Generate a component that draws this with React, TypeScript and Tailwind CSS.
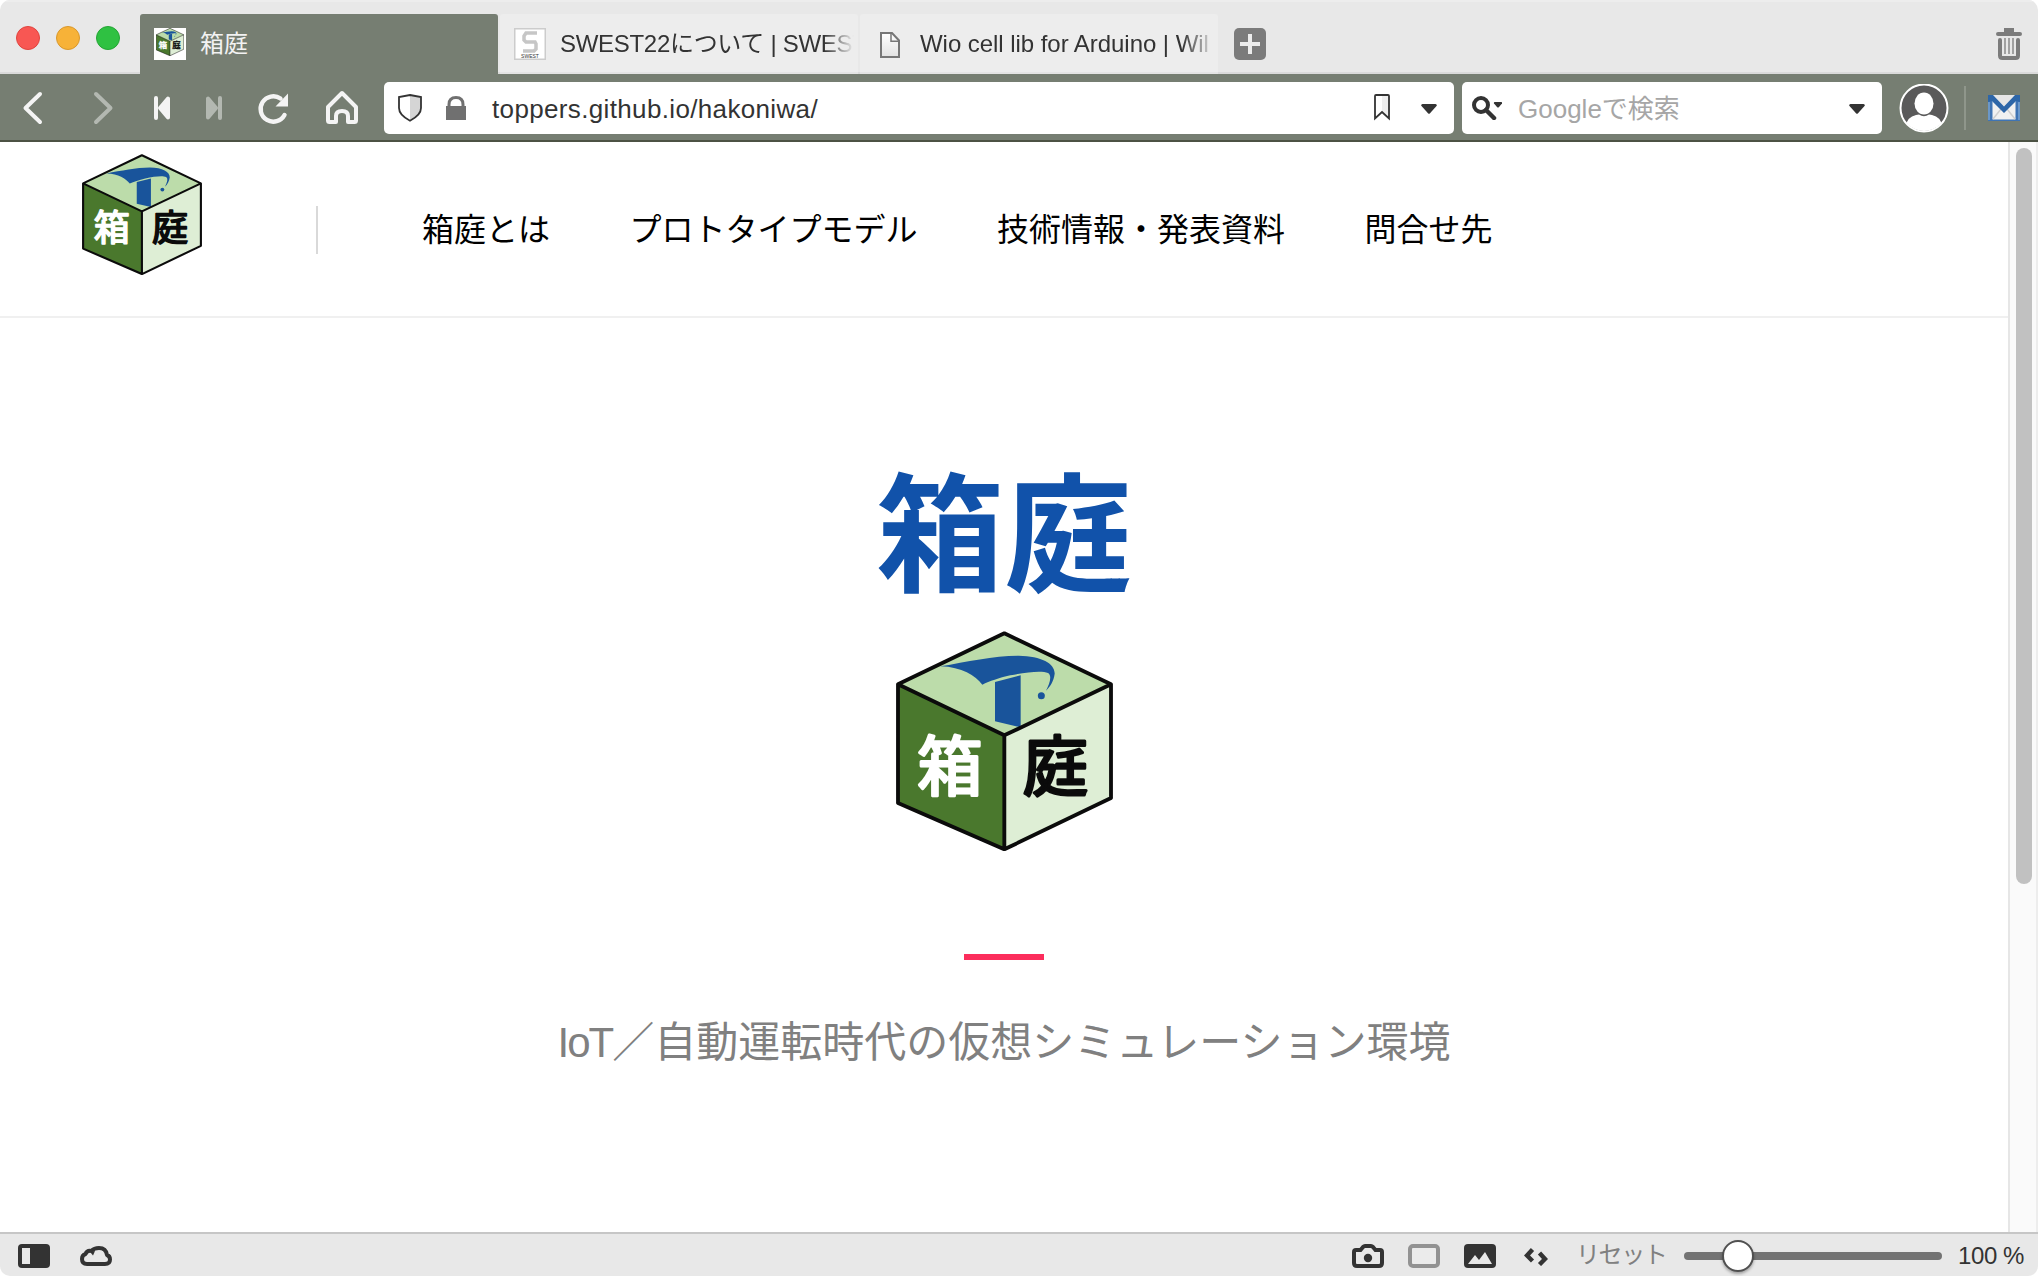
import React from "react";

const CJK = "font-['Liberation_Sans','Noto_Sans_CJK_JP',sans-serif]";

function CubeLogo({ className }: { className: string }) {
  return (
    <svg className={className} viewBox="107 542 651 660" preserveAspectRatio="none">
      <path d="M432 549 752 702 432 855 113 702Z" fill="#bcdcaa" />
      <path d="M113 702 432 855V1197L113 1058Z" fill="#4a782d" />
      <path d="M752 702 432 855V1197L752 1043Z" fill="#deeed5" />
      <path
        d="M240 648C320 634 400 616 475 616C545 617 584 640 583 670C580 692 570 708 557 721C568 700 576 676 563 668C545 660 500 665 450 675C415 683 388 693 366 703C345 676 305 650 240 648Z"
        fill="#19549b"
      />
      <path d="M404 695 481 675V831L404 813Z" fill="#19549b" />
      <circle cx="543" cy="736" r="10.5" fill="#19549b" />
      <path
        d="M432 549 752 702V1043L432 1197 113 1058V702ZM113 702 432 855 752 702M432 855V1197"
        fill="none"
        stroke="#0b0b0b"
        strokeWidth="11.5"
        strokeLinejoin="round"
      />
      <g
        fontFamily="'Noto Sans CJK JP', sans-serif"
        fontSize="196"
        fontWeight="400"
        textAnchor="middle"
        strokeWidth="9"
        strokeLinejoin="round"
      >
        <text x="269" y="1018" fill="#fff" stroke="#fff">箱</text>
        <text x="585" y="1018" fill="#0b0b0b" stroke="#0b0b0b">庭</text>
      </g>
    </svg>
  );
}

function Caret({ className }: { className: string }) {
  return (
    <svg className={className} viewBox="0 0 16 10">
      <path d="M1.5 0h13q2 .6 1 2L9 9.300q-1 1-2 0L.5 2q-1-1.400 1-2Z" fill="#333" />
    </svg>
  );
}

function TabStrip() {
  return (
    <div className="flex h-[74px] shrink-0 bg-[#e8e8e8] pt-3.5 shadow-[inset_0_-2px_0_#dadada,inset_0_2px_0_#ededed]">
      <div className="flex w-[140px] gap-4 pl-4 pt-3">
        <div className="size-6 rounded-full border border-[#e0443e] bg-[#f85753]" />
        <div className="size-6 rounded-full border border-[#d9982c] bg-[#f7b238]" />
        <div className="size-6 rounded-full border border-[#24a534] bg-[#2fc142]" />
      </div>
      <div className="flex h-[60px] w-[358px] rounded-t-[3px] bg-[#767e72] pl-3.5 pt-3.5">
        <div className="size-8 shrink-0 bg-white">
          <CubeLogo className="ml-0.5 h-[28px] w-[28px]" />
        </div>
        <div className="ml-3.5 mt-px text-[24px] leading-[30px] text-[#f2f2f2]">箱庭</div>
      </div>
      <div className="ml-0.5 flex h-[60px] w-[358px] rounded-t-[3px] border-b-2 border-[#e4e4e4] bg-[#ededed] pl-3.5 pt-3.5">
        <svg className="size-8 shrink-0" viewBox="0 0 32 32">
          <rect x=".75" y=".75" width="30.500" height="30.500" fill="#fff" stroke="#ccc" strokeWidth="1.500" />
          <path d="M23 5H12L10 8v4l2 2h9l1 2v5l-2 2H9" fill="none" stroke="#c6c6c6" strokeWidth="3.500" />
          <text x="16" y="29.500" fontSize="5" textAnchor="middle" fill="#333" fontFamily="Liberation Sans">SWEST</text>
        </svg>
        <div className="ml-3.5 w-[298px] shrink-0 whitespace-nowrap text-[24px] leading-8 tracking-[-0.3px] text-[#333] [mask-image:linear-gradient(to_right,#000_264px,transparent_294px)]">
          SWEST22について | SWEST
        </div>
      </div>
      <div className="ml-0.5 flex h-[60px] w-[358px] rounded-t-[3px] border-b-2 border-[#e4e4e4] bg-[#ededed] pl-5 pt-3.5">
        <svg className="mt-1 h-[26px] w-5 shrink-0" viewBox="0 0 20 26">
          <defs>
            <linearGradient id="doc" x1="0" y1="0" x2="0" y2="1">
              <stop offset="0" stopColor="#fff" />
              <stop offset="1" stopColor="#e2e2e2" />
            </linearGradient>
          </defs>
          <path d="M1 1H12L19 8.500V25H1Z" fill="url(#doc)" stroke="#777" strokeWidth="2" />
          <path d="M11 1V9.300H19" fill="none" stroke="#777" strokeWidth="1.500" />
        </svg>
        <div className="ml-5 w-[298px] shrink-0 whitespace-nowrap text-[24px] leading-8 tracking-[-0.05px] text-[#333] [mask-image:linear-gradient(to_right,#000_262px,transparent_296px)]">
          Wio cell lib for Arduino | Wil
        </div>
      </div>
      <svg className="ml-4 mt-3.5 size-8" viewBox="0 0 32 32">
        <rect width="32" height="32" rx="5" fill="#7b7b7b" />
        <path d="M16 6V26M6 16H26" stroke="#ececec" strokeWidth="4" />
      </svg>
      <svg className="ml-auto mr-4 mt-3.5 h-8 w-[26px]" viewBox="0 0 26 32">
        <path d="M8 0h10v4h6q2 0 2 2t-2 2H2Q0 8 0 6t2-2h6Z" fill="#7c7c7c" />
        <path d="M4 12V27.500Q4 30 6.500 30H19.500Q22 30 22 27.500V12" fill="none" stroke="#7c7c7c" strokeWidth="4" strokeLinecap="round" />
        <path d="M9 10V26M13 10V26M17 10V26" stroke="#999" strokeWidth="1.800" />
      </svg>
    </div>
  );
}

function Toolbar() {
  return (
    <div className="flex h-[68px] shrink-0 border-b-2 border-[#4c5244] bg-[#767e72] pt-2">
      <svg className="h-[52px] w-[384px] shrink-0" viewBox="0 82 384 52" fill="none">
        <path d="M40 94 25.500 108 40 122" stroke="#f4f4f4" strokeWidth="4" strokeLinecap="round" strokeLinejoin="round" />
        <path d="M96 94 110.500 108 96 122" stroke="#b3b8b1" strokeWidth="4" strokeLinecap="round" strokeLinejoin="round" />
        <path d="M156 98V118" stroke="#f4f4f4" strokeWidth="4" strokeLinecap="round" />
        <path d="M168 98.500V117.500L160 108Z" fill="#f4f4f4" stroke="#f4f4f4" strokeWidth="4" strokeLinejoin="round" />
        <path d="M220 98V118" stroke="#b3b8b1" strokeWidth="4" strokeLinecap="round" />
        <path d="M208 98.500V117.500L216 108Z" fill="#b3b8b1" stroke="#b3b8b1" strokeWidth="4" strokeLinejoin="round" />
        <path d="M280.500 98.500A12.700 12.700 0 1 0 284.500 115" stroke="#f4f4f4" strokeWidth="4.400" strokeLinecap="round" />
        <path d="M288 93.500V106.500H275.500Z" fill="#f4f4f4" />
        <path
          d="M342 93 328 107V120.500Q328 122 329.500 122H336V116Q336 111 342 111T348 116V122H354.500Q356 122 356 120.500V107Z"
          stroke="#f4f4f4"
          strokeWidth="4"
          strokeLinejoin="round"
        />
      </svg>
      <div className="flex h-[52px] w-[1070px] shrink-0 rounded-[5px] bg-white pl-3.5">
        <svg className="mt-3 h-7 w-6" viewBox="0 0 24 28">
          <path d="M12 1 23 3.500V14Q23 21 12 27Q1 21 1 14V3.500Z" fill="#fff" />
          <path d="M12 1 23 3.500V14Q23 21 12 27Z" fill="#d5d5d5" />
          <path d="M12 1 23 3V14Q23 21 12 26.700Q1 21 1 14V3Z" fill="none" stroke="#333" strokeWidth="1.800" />
        </svg>
        <svg className="ml-6 mt-3.5 h-6 w-5" viewBox="0 0 20 24">
          <path d="M0 10H20V24H0Z" fill="#707070" />
          <path d="M3 12V8.500Q3 1.500 10 1.500T17 8.500V12" fill="none" stroke="#707070" strokeWidth="3" />
        </svg>
        <div className="ml-[26px] w-[882px] text-[26px] leading-[54px] tracking-[0.35px] text-[#333]">toppers.github.io/hakoniwa/</div>
        <svg className="mt-3 h-[27px] w-4" viewBox="0 0 16 27">
          <path d="M8 1H15V24L8 18Z" fill="#eee" />
          <path d="M1 2Q1 1 2 1H14Q15 1 15 2V24.500L8 18 1 24.500Z" fill="none" stroke="#333" strokeWidth="1.800" />
        </svg>
        <Caret className="ml-[31px] mt-[22px] h-2.5 w-4" />
      </div>
      <div className="ml-2 flex h-[52px] w-[420px] shrink-0 rounded-[5px] bg-white pl-2.5">
        <svg className="mt-3.5 h-6 w-[30px]" viewBox="0 0 30 24">
          <circle cx="9" cy="9" r="7" fill="none" stroke="#333" strokeWidth="4" />
          <path d="M14 14 22 22" stroke="#333" strokeWidth="4.500" strokeLinecap="round" />
          <path d="M22.500 6h7q1 .5 .5 1.500L27 11q-1 1-2 0L22 7.500q-.5-1 .5-1.500Z" fill="#333" />
        </svg>
        <div className="ml-4 w-[331px] text-[26px] leading-[54px] text-[#a6a6a6]">Googleで検索</div>
        <Caret className="mt-[22px] h-2.5 w-4" />
      </div>
      <svg className="ml-[17px] mt-0.5 size-[50px]" viewBox="0 0 50 50">
        <defs>
          <clipPath id="face"><circle cx="25" cy="24" r="23" /></clipPath>
        </defs>
        <circle cx="25" cy="24" r="23.500" fill="#5a5a5a" stroke="#fff" strokeWidth="2" />
        <g fill="#fff" clipPath="url(#face)">
          <ellipse cx="25" cy="19.500" rx="9.500" ry="11" />
          <path d="M7 42Q8 33 17 31L20 30.500Q25 34 30 30.500L33 31Q42 33 43 42L25 50Z" />
        </g>
      </svg>
      <div className="ml-[15px] mt-1 h-11 w-0.5 bg-[#8f968b]" />
      <svg className="ml-[22px] mt-[13px] h-[26px] w-8" viewBox="0 0 32 26">
        <rect width="32" height="26" fill="#3f74b4" />
        <rect x="4.500" y="1" width="23" height="23.500" fill="#f1f1f1" />
        <path d="M5 24 13 14M27 24 19 14" stroke="#d0d0d0" strokeWidth="1.500" />
        <path d="M4 0H28L16 11Z" fill="#e6e6e6" />
        <path d="M0 0H5L16 11.500 27 0H32V7L28 6 16 18 4 6 0 7Z" fill="#2d66a8" />
        <path d="M1 7V25M31 7V25" stroke="#7aa3d0" strokeWidth="1.500" />
      </svg>
    </div>
  );
}

const NAV = ["箱庭とは", "プロトタイプモデル", "技術情報・発表資料", "問合せ先"];

function Page() {
  return (
    <div className="flex h-[1090px] shrink-0">
      <div className="w-[2008px] bg-white">
        <header className="flex h-44 border-b-2 border-[#f0f0f0] pl-[82px]">
          <CubeLogo className="mt-3 h-[121px] w-[120px]" />
          <div className="ml-[114px] mt-16 h-12 w-0.5 bg-[#d9d9d9]" />
          <nav className="ml-[104px] mt-16 flex gap-x-[79.5px] text-[32px] leading-[48px] text-black">
            {NAV.map((label) => (
              <a key={label}>{label}</a>
            ))}
          </nav>
        </header>
        <main className="flex flex-col items-center">
          <h1 className="mt-[124px] text-[128px] font-bold leading-[192px] text-[#1152aa]">箱庭</h1>
          <CubeLogo className="-mt-[3px] h-[220px] w-[217px]" />
          <div className="mt-[103px] h-1.5 w-20 bg-[#fc2d5c]" />
          <p className="mt-[52px] text-[42px] leading-[62px] text-[#808080]">
            <span className="tracking-[-2px]">IoT</span>／自動運転時代の仮想シミュレーション環境
          </p>
        </main>
      </div>
      <div className="w-[30px] border-l-2 border-r-2 border-l-[#e6e6e6] border-r-[#ededed] bg-[#fafafa] pl-1.5 pt-1.5">
        <div className="h-[736px] w-4 rounded-full bg-[#c1c1c1]" />
      </div>
    </div>
  );
}

function StatusBar() {
  return (
    <div className="flex h-11 shrink-0 items-start border-t-2 border-[#c6c6c6] bg-[#e8e8e8] pl-[18px]">
      <svg className="mt-2.5 h-6 w-8" viewBox="0 0 32 24">
        <rect width="32" height="24" rx="4" fill="#333" />
        <rect x="4" y="4" width="8" height="16" fill="#e8e8e8" />
      </svg>
      <svg className="ml-[30px] mt-3 h-5 w-8" viewBox="0 0 32 20">
        <path
          d="M7 18Q2 18 2 13Q2 9 5.500 8Q7 4 11.500 5Q14 2 19 2Q26 2 27 9Q30 10 30 13.500Q30 18 25 18Z"
          fill="none"
          stroke="#333"
          strokeWidth="4"
          strokeLinejoin="round"
        />
        <path d="M10.500 6.500 13 9.500 15 5" fill="#333" />
      </svg>
      <svg className="ml-auto mt-2.5 h-6 w-8" viewBox="0 0 32 24">
        <path
          d="M2 8Q2 6 4 6H8.500L11 3Q12 2 13 2H19Q20 2 21 3L23.500 6H28Q30 6 30 8V19Q30 22 27 22H5Q2 22 2 19Z"
          fill="none"
          stroke="#333"
          strokeWidth="4"
        />
        <circle cx="16" cy="14" r="4.200" fill="#333" />
      </svg>
      <svg className="ml-6 mt-2.5 h-6 w-8" viewBox="0 0 32 24">
        <rect x="2" y="2" width="28" height="20" rx="3" fill="#ebebeb" stroke="#929292" strokeWidth="4" />
      </svg>
      <svg className="ml-6 mt-2.5 h-6 w-8" viewBox="0 0 32 24">
        <rect width="32" height="24" rx="4" fill="#333" />
        <path d="M4 20 11 11 15 16 21 8 28 20Z" fill="#e8e8e8" />
      </svg>
      <svg className="ml-7 mt-3.5 h-[18px] w-6" viewBox="0 0 24 18">
        <path d="M8.500 1.500 3 7.500 8.500 13M15.500 5 21 11 15.500 16.500" fill="none" stroke="#333" strokeWidth="4.400" />
      </svg>
      <div className="ml-[28px] w-[108px] whitespace-nowrap text-[24px] leading-[42px] tracking-[-1.4px] text-[#808080]">リセット</div>
      <div className="mt-[18px] h-2 w-[258px] rounded-full bg-[#737373]">
        <div className="relative -top-3 left-[38px] size-8 rounded-full border-2 border-[#505050] bg-white shadow-[0_2px_3px_rgba(0,0,0,0.3)]" />
      </div>
      <div className="ml-4 w-20 whitespace-nowrap text-[24px] leading-[43px] tracking-[-0.4px] text-[#333]">100 %</div>
    </div>
  );
}

export default function App() {
  return (
    <div className={`${CJK} flex h-[1276px] w-[2038px] flex-col overflow-hidden rounded-[10px] bg-white`}>
      <TabStrip />
      <Toolbar />
      <Page />
      <StatusBar />
    </div>
  );
}
